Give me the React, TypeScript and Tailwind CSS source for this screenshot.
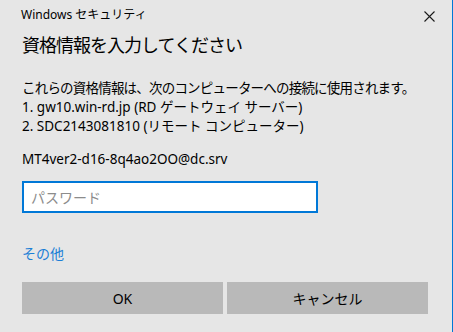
const ui = "font-['Segoe_UI','Noto_Sans','Noto_Sans_CJK_JP',sans-serif]";

function CloseIcon() {
  return (
    <svg width="11" height="11" viewBox="0 0 11 11" fill="none">
      <path d="M0.5 0.5 L10.5 10.5 M10.5 0.5 L0.5 10.5" stroke="#1a1a1a" strokeWidth="1.1" />
    </svg>
  );
}

export default function App() {
  return (
    <div className={`w-[453px] h-[332px] bg-[#e6e6e6] border-r border-[#0078d7] text-black ${ui} overflow-hidden`}>
      <div className="flex items-start justify-between pl-[21px] pr-[17px] pt-[7px]">
        <span className="text-[12px] leading-[16px]">Windows セキュリティ</span>
        <span className="mt-[4px]">
          <CloseIcon />
        </span>
      </div>
      <div className="pl-[22px] pr-[24px]">
        <h1 className="mt-[9px] text-[18px] leading-[26px] tracking-[-1px] font-normal">
          資格情報を入力してください
        </h1>
        <div className="mt-[21px] text-[13.5px] leading-[19px]">
          <p className="tracking-[-0.8px]">これらの資格情報は、次のコンピューターへの接続に使用されます。</p>
          <p>1. gw10.win-rd.jp (RD ゲートウェイ サーバー)</p>
          <p>2. SDC2143081810 (リモート コンピューター)</p>
        </div>
        <p className="mt-[14px] text-[13.5px] leading-[19px]">MT4ver2-d16-8q4ao2OO@dc.srv</p>
        <div className="mt-[12px] w-[296px] h-[32px] bg-white border-2 border-[#0078d7] flex items-center pl-[7px]">
          <input
            autoFocus
            className="w-full outline-none bg-transparent text-[14px] placeholder:text-[#8c8c8c] caret-black"
            placeholder="パスワード"
          />
        </div>
        <a className="block mt-[31px] text-[14px] leading-[19px] text-[#1b7fd6]">その他</a>
        <div className="mt-[19px] flex gap-[4px]">
          <button className="w-[201px] h-[32px] bg-[#b9b9b9] text-[14px]">OK</button>
          <button className="w-[201px] h-[32px] bg-[#b9b9b9] text-[14px]">キャンセル</button>
        </div>
      </div>
    </div>
  );
}
